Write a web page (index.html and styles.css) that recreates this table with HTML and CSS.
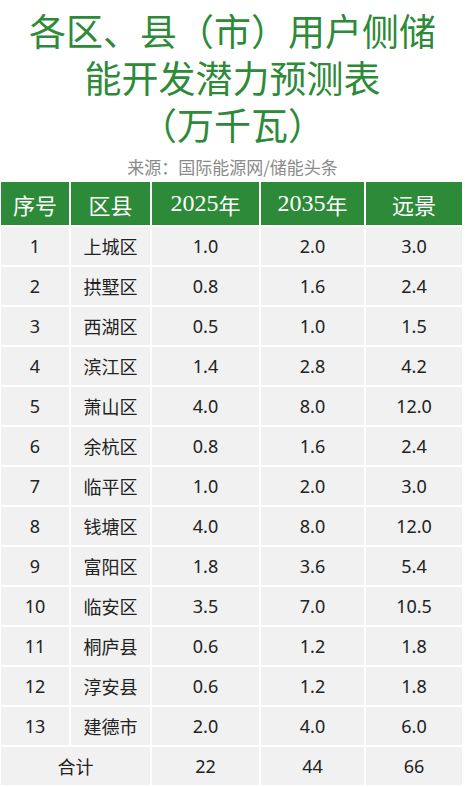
FILE: index.html
```html
<html>
<head>
	<title>各区、县（市）用户侧储能开发潜力预测表</title>
	<link rel="stylesheet" href="styles.css">
</head>
<body>
	<div class="pageTitle">各区、县（市）用户侧储<br>能开发潜力预测表<br>（万千瓦）</div>
	<div class="source">来源：国际能源网/储能头条</div>
	<div class="dataTable">
		<div class="head">序号</div>
		<div class="head">区县</div>
		<div class="head"><span class="num">2025</span>年</div>
		<div class="head"><span class="num">2035</span>年</div>
		<div class="head">远景</div>

		<div class="cell">1</div><div class="cell">上城区</div><div class="cell">1.0</div><div class="cell">2.0</div><div class="cell">3.0</div>
		<div class="cell">2</div><div class="cell">拱墅区</div><div class="cell">0.8</div><div class="cell">1.6</div><div class="cell">2.4</div>
		<div class="cell">3</div><div class="cell">西湖区</div><div class="cell">0.5</div><div class="cell">1.0</div><div class="cell">1.5</div>
		<div class="cell">4</div><div class="cell">滨江区</div><div class="cell">1.4</div><div class="cell">2.8</div><div class="cell">4.2</div>
		<div class="cell">5</div><div class="cell">萧山区</div><div class="cell">4.0</div><div class="cell">8.0</div><div class="cell">12.0</div>
		<div class="cell">6</div><div class="cell">余杭区</div><div class="cell">0.8</div><div class="cell">1.6</div><div class="cell">2.4</div>
		<div class="cell">7</div><div class="cell">临平区</div><div class="cell">1.0</div><div class="cell">2.0</div><div class="cell">3.0</div>
		<div class="cell">8</div><div class="cell">钱塘区</div><div class="cell">4.0</div><div class="cell">8.0</div><div class="cell">12.0</div>
		<div class="cell">9</div><div class="cell">富阳区</div><div class="cell">1.8</div><div class="cell">3.6</div><div class="cell">5.4</div>
		<div class="cell">10</div><div class="cell">临安区</div><div class="cell">3.5</div><div class="cell">7.0</div><div class="cell">10.5</div>
		<div class="cell">11</div><div class="cell">桐庐县</div><div class="cell">0.6</div><div class="cell">1.2</div><div class="cell">1.8</div>
		<div class="cell">12</div><div class="cell">淳安县</div><div class="cell">0.6</div><div class="cell">1.2</div><div class="cell">1.8</div>
		<div class="cell">13</div><div class="cell">建德市</div><div class="cell">2.0</div><div class="cell">4.0</div><div class="cell">6.0</div>

		<div class="cell total">合计</div><div class="cell">22</div><div class="cell">44</div><div class="cell">66</div>
	</div>
</body>
</html>
```

FILE: styles.css
```css
		body {
			margin: 0px;
			background: white;
			font-family: "Noto Sans", "Noto Sans CJK SC", sans-serif;
		}
		.pageTitle {
			padding-top: 7px;
			text-align: center;
			font-family: "Noto Sans CJK SC", sans-serif;
			font-size: 37px;
			line-height: 47px;
			color: #2d8a38;
		}
		.source {
			margin-top: 7px;
			text-align: center;
			font-family: "Noto Sans CJK SC", sans-serif;
			font-size: 17px;
			line-height: 24px;
			color: #8a8a8a;
		}
		.dataTable {
			display: grid;
			grid-template-columns: 68px 79px 107px 103px 96px;
			grid-auto-rows: 38px;
			grid-template-rows: 43px;
			gap: 2px;
			margin: 3px 0px 0px 1px;
		}
		.head {
			background: #2d8a38;
			color: white;
			font-family: "Noto Sans CJK SC", sans-serif;
			font-size: 22px;
			display: flex;
			align-items: center;
			justify-content: center;
		}
		.head .num {
			font-family: "Liberation Serif", serif;
			font-size: 24px;
		}
		.cell {
			background: #f1f1f1;
			color: #222;
			font-size: 18px;
			display: flex;
			align-items: center;
			justify-content: center;
		}
		.total {
			grid-column: span 2;
		}
```
